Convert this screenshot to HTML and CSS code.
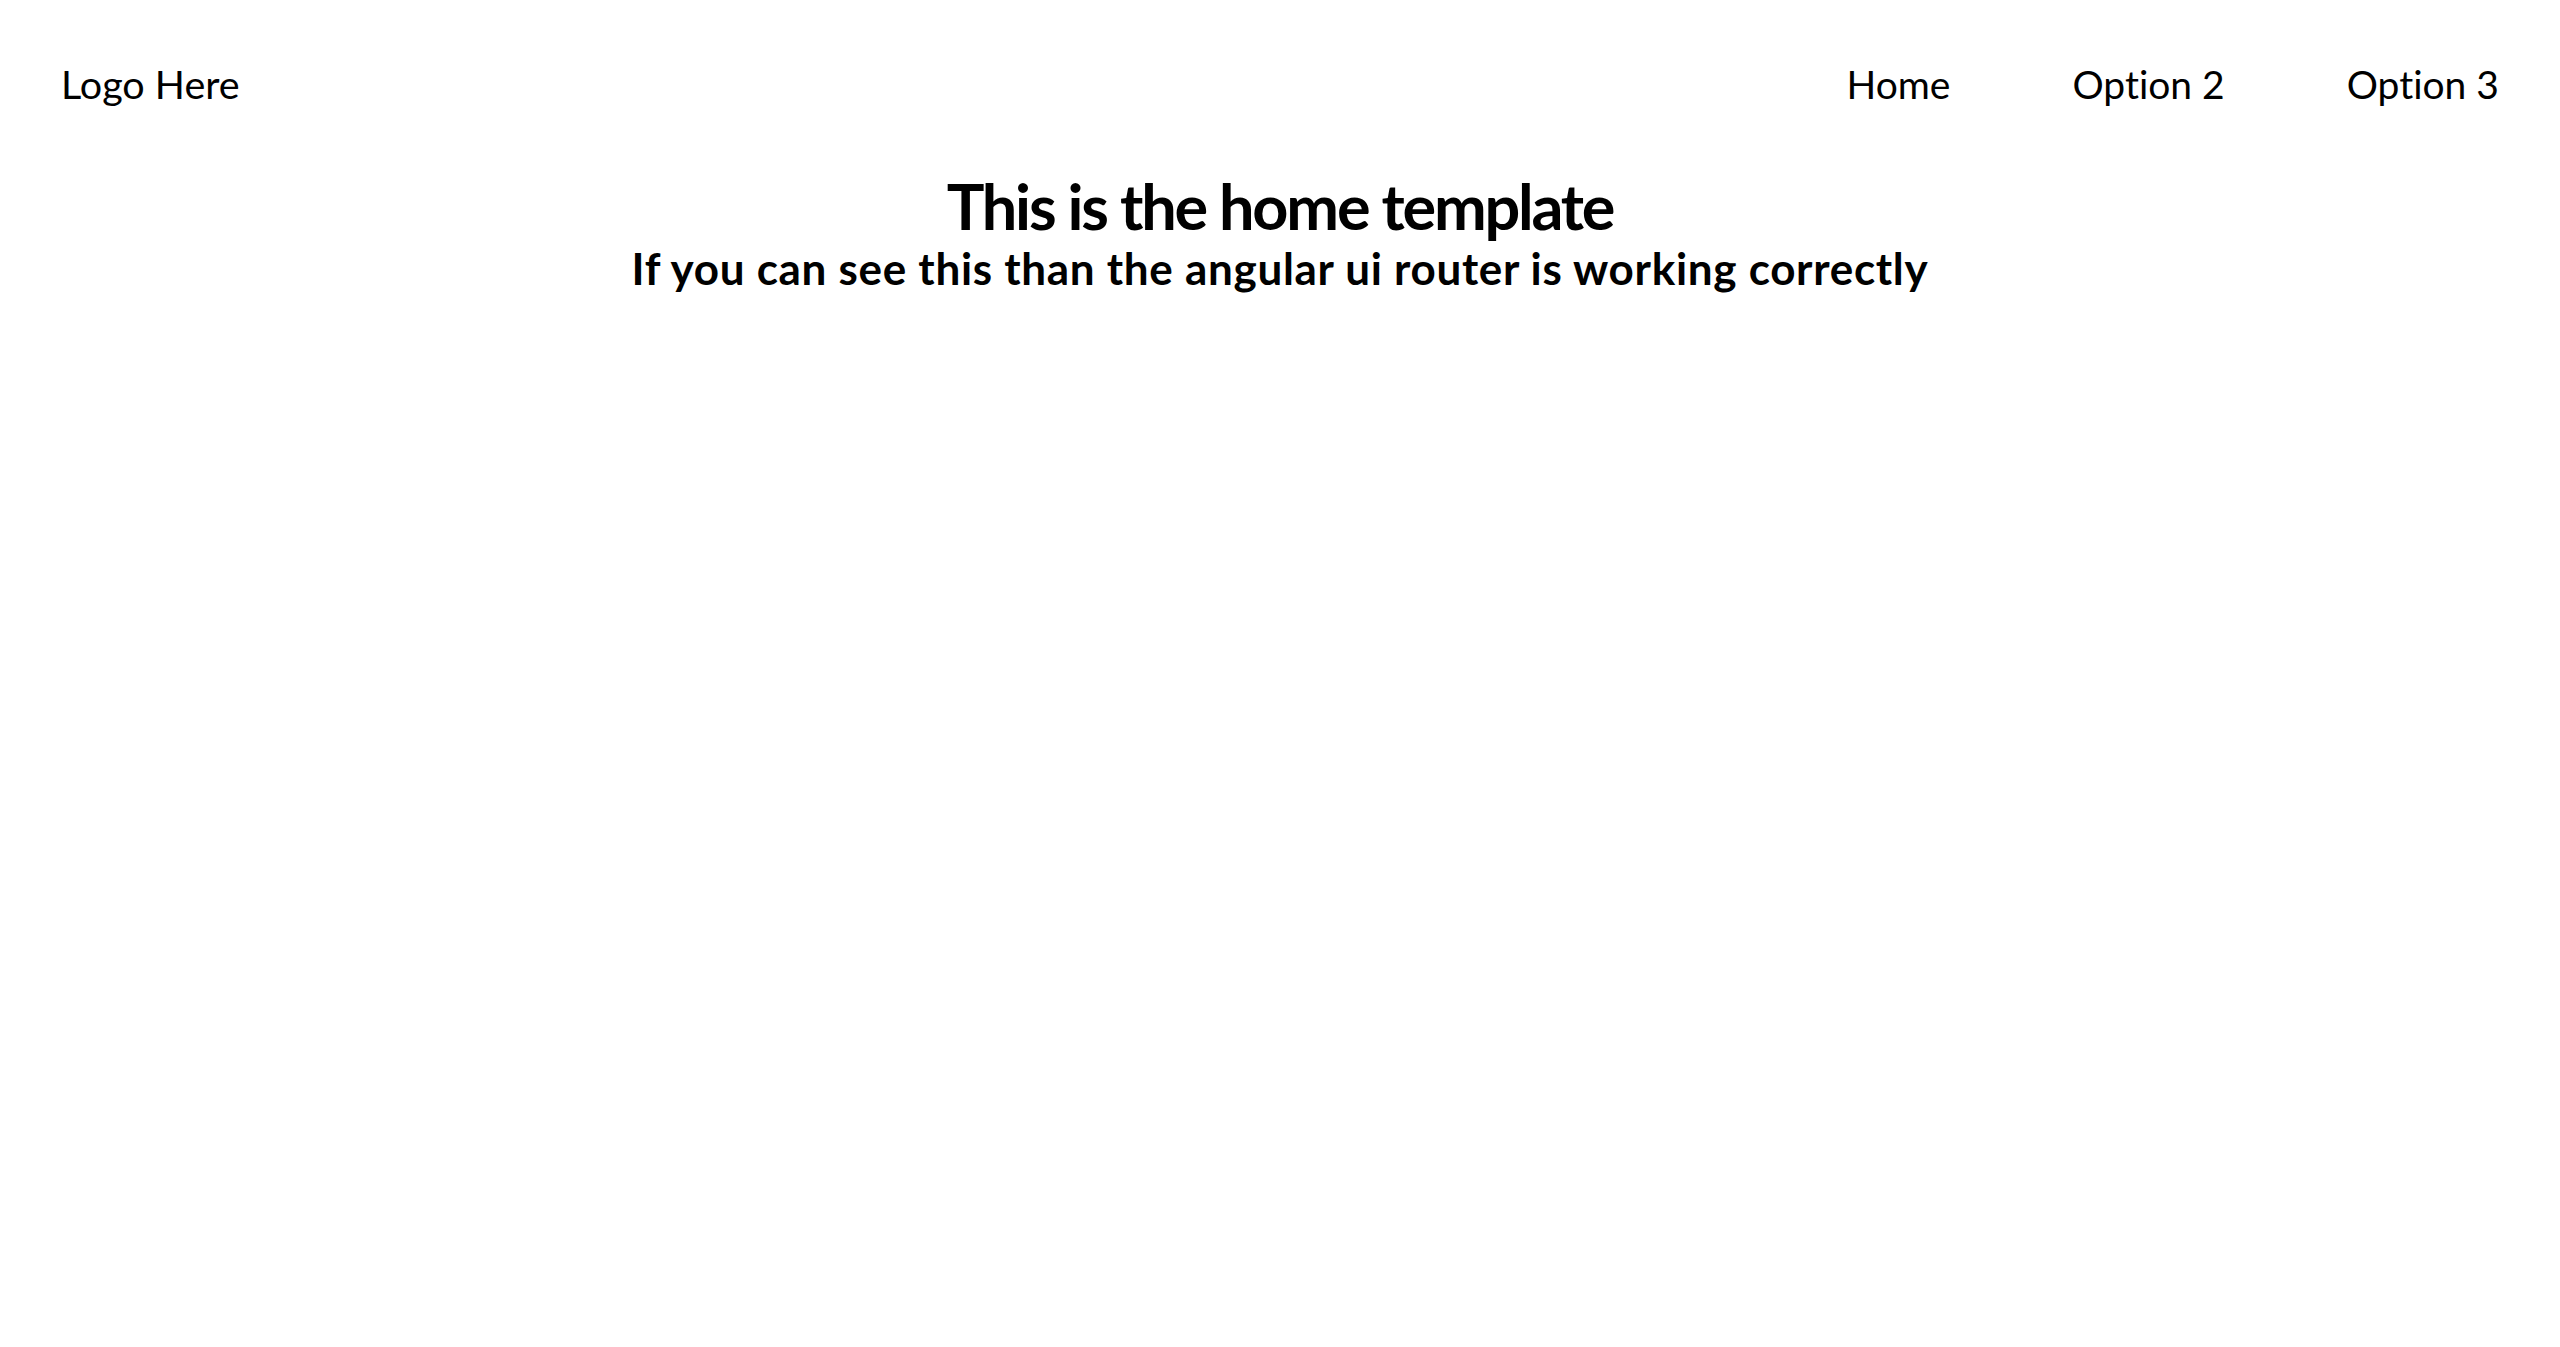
FILE: index.html
```html
<!DOCTYPE html>
<html>
<head>
<meta charset="utf-8">
<title>Home</title>
<link rel="stylesheet" href="styles.css">
</head>
<body>
<header class="topbar">
  <div class="logo">Logo Here</div>
  <nav class="nav">
    <a class="nav-item" href="#">Home</a>
    <a class="nav-item" href="#">Option 2</a>
    <a class="nav-item" href="#">Option 3</a>
  </nav>
</header>
<main class="content">
  <h1 class="title">This is the home template</h1>
  <h2 class="subtitle">If you can see this than the angular ui router is working correctly</h2>
</main>
</body>
</html>
```
FILE: styles.css
```css
html, body {
  margin: 0;
  padding: 0;
  background: #fff;
  color: #000;
  font-family: Lato, "Open Sans", sans-serif;
}
.topbar {
  display: flex;
  justify-content: space-between;
  align-items: center;
  padding: 60px 61px 0 61px;
}
.logo {
  font-size: 39.5px;
  line-height: 48px;
}
.nav {
  display: flex;
  gap: 122px;
}
.nav-item {
  font-size: 39px;
  line-height: 48px;
  color: #000;
  text-decoration: none;
  font-variant-ligatures: none;
}
.content {
  text-align: center;
  margin-top: 60px;
}
.title {
  margin: 0;
  font-size: 63px;
  font-weight: 700;
  line-height: 1.2;
  letter-spacing: -2.2px;
}
.subtitle {
  margin: 0;
  font-size: 44px;
  font-weight: 700;
  line-height: 1.12;
  letter-spacing: 0.7px;
}
```
